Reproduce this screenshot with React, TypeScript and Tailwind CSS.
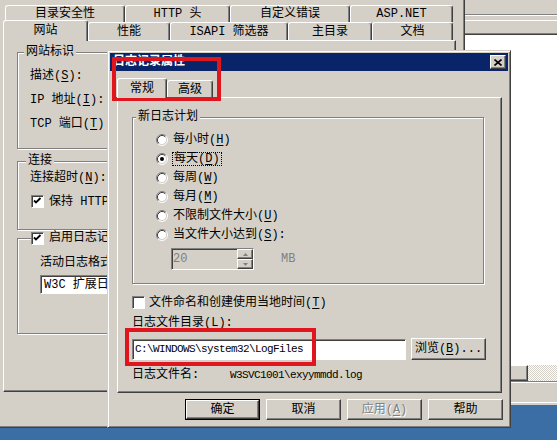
import React from "react";

const raised =
  "border border-t-white border-l-white border-r-[#404040] border-b-[#404040] shadow-[inset_-1px_-1px_#808080]";
const sunken =
  "border border-t-[#808080] border-l-[#808080] border-r-white border-b-white shadow-[inset_1px_1px_#404040]";

const U = ({ c }: { c: string }) => <span className="underline underline-offset-[2px]">{c}</span>;

const Radio = ({ checked = false }: { checked?: boolean }) => (
  <svg width="12" height="12" viewBox="0 0 12 12" className="shrink-0">
    <circle cx="6" cy="6" r="4.5" fill="#fff" />
    <path d="M2.11 9.89A5.5 5.5 0 0 1 9.89 2.11" fill="none" stroke="#808080" />
    <path d="M9.89 2.11A5.5 5.5 0 0 1 2.11 9.89" fill="none" stroke="#fff" />
    <path d="M2.82 9.18A4.5 4.5 0 0 1 9.18 2.82" fill="none" stroke="#404040" />
    <path d="M9.18 2.82A4.5 4.5 0 0 1 2.82 9.18" fill="none" stroke="#d4d0c8" />
    {checked && <circle cx="6" cy="6" r="2" fill="#000" />}
  </svg>
);

const Check = ({ checked = false }: { checked?: boolean }) => (
  <div className={`w-[13px] h-[13px] shrink-0 bg-white ${sunken}`}>
    {checked && (
      <svg width="11" height="11" viewBox="0 0 11 11">
        <path d="M2 4.5l2 2 4.5-4.5" fill="none" stroke="#000" strokeWidth="1.8" />
      </svg>
    )}
  </div>
);

interface GroupBoxProps {
  label: React.ReactNode;
  className?: string;
  labelClass?: string;
  children?: React.ReactNode;
}

const GroupBox: React.FC<GroupBoxProps> = ({ label, className = "", labelClass = "ml-[6px] px-[2px]", children }) => (
  <div className={`border border-[#808080] shadow-[1px_1px_0_#fff,inset_1px_1px_0_#fff] ${className}`}>
    <div className={`-mt-[8px] h-[14px] w-fit flex items-center gap-[5px] bg-[#d4d0c8] ${labelClass}`}>{label}</div>
    {children}
  </div>
);

const Btn = ({ children, isDefault = false, disabled = false }: { children: React.ReactNode; isDefault?: boolean; disabled?: boolean }) => {
  const text = disabled ? "text-[#808080] [text-shadow:1px_1px_#fff]" : "";
  return isDefault ? (
    <div className="w-[75px] h-[21px] border border-black">
      <div className={`h-full flex items-center justify-center ${raised} ${text}`}>{children}</div>
    </div>
  ) : (
    <div className={`w-[75px] h-[21px] flex items-center justify-center ${raised} ${text}`}>{children}</div>
  );
};

const BackTab = ({ label, w, selected = false }: { label: string; w: string; selected?: boolean }) => (
  <div
    className={`flex items-center justify-center bg-[#d4d0c8] rounded-t-[3px] border-t border-l border-r border-t-white border-l-white border-r-[#404040] shadow-[inset_-1px_0_#808080] ${w} ${
      selected ? "relative z-10 -mb-px h-[21px]" : "h-full"
    }`}
  >
    {label}
  </div>
);

const SpinArrow = ({ up }: { up?: boolean }) => (
  <svg width="5" height="3" viewBox="0 0 5 3">
    <path d={up ? "M2.5 0L5 3H0z" : "M0 0h5L2.5 3z"} fill="#808080" />
  </svg>
);

export default function App() {
  return (
    <div className="relative w-[557px] h-[440px] overflow-hidden bg-[#3a6ea5] text-black text-[12px] leading-[14px] font-['Liberation_Mono','Noto_Sans_CJK_SC',monospace]">
      {/* MMC window behind */}
      <div className="absolute left-[440px] top-0 w-[117px] h-[405px] bg-[#d4d0c8] flex flex-col">
        <div className="h-[14px]" />
        <div className="h-px bg-[#808080]" />
        <div className="h-px bg-white" />
        <div className="h-[4px]" />
        <div className="h-px bg-white" />
        <div className="h-[12px]" />
        <div className="h-px bg-[#808080]" />
        <div className="h-px bg-[#404040]" />
        <div className="h-[330px] bg-white" />
        <div className="h-[16px] flex">
          <div className={`w-[88px] bg-[#d4d0c8] ${raised}`} />
          <div className="flex-1 bg-[repeating-conic-gradient(#d4d0c8_0_25%,#fff_0_50%)] bg-[length:2px_2px]" />
        </div>
        <div className="h-px bg-[#808080]" />
        <div className="h-px bg-white" />
        <div className="h-[19px]" />
        <div className="h-px bg-white" />
      </div>

      {/* website properties window */}
      <div className="absolute left-0 top-0 w-[465px] h-[428px] bg-[#d4d0c8] pl-[3px] pt-[5px] border-r border-b border-r-[#404040] border-b-[#404040] shadow-[inset_-1px_-1px_#808080]">
        <div className="flex h-[17px] pl-[2px]">
          <BackTab label="目录安全性" w="w-[120px]" />
          <BackTab label="HTTP 头" w="w-[105px]" />
          <BackTab label="自定义错误" w="w-[120px]" />
          <BackTab label="ASP.NET" w="w-[103px]" />
        </div>
        <div className="flex items-end h-[18px]">
          <BackTab label="网站" w="w-[85px]" selected />
          <BackTab label="性能" w="w-[82px]" />
          <BackTab label="ISAPI 筛选器" w="w-[118px]" />
          <BackTab label="主目录" w="w-[84px]" />
          <BackTab label="文档" w="w-[81px]" />
        </div>
        <div className={`w-[453px] h-[352px] pt-[11px] pl-[13px] ${raised}`}>
          <GroupBox label="网站标识" className="w-[425px] h-[97px]">
            <div className="pl-[12px] pt-[5px]">
              <div className="h-[24px] flex items-center">描述(<U c="S" />):</div>
              <div className="h-[24px] flex items-center">IP 地址(<U c="I" />):</div>
              <div className="h-[24px] flex items-center">TCP 端口(<U c="T" />):</div>
            </div>
          </GroupBox>
          <GroupBox label="连接" className="w-[425px] h-[69px] mt-[12px]" labelClass="ml-[8px] px-[2px]">
            <div className="pl-[12px] pt-[5px] h-[14px] flex items-center">连接超时(<U c="N" />):</div>
            <div className="pl-[13px] mt-[13px] flex items-center gap-[5px] h-[13px]">
              <Check checked />
              <span>保持 HTTP 连接(<U c="K" />)</span>
            </div>
          </GroupBox>
          <GroupBox
            label={
              <>
                <Check checked />
                <span>启用日志记录(<U c="E" />)</span>
              </>
            }
            className="w-[425px] h-[96px] mt-[8px]"
            labelClass="ml-[13px] pr-[2px]"
          >
            <div className="pl-[22px] mt-[11px] h-[14px] flex items-center">活动日志格式(<U c="V" />):</div>
            <div className={`ml-[22px] mt-[5px] w-[220px] h-[19px] bg-white flex items-center pl-[3px] ${sunken}`}>
              W3C 扩展日志文件格式
            </div>
          </GroupBox>
        </div>
      </div>

      {/* logging properties dialog */}
      <div className="absolute left-[107px] top-[50px] w-[404px] h-[378px] bg-[#d4d0c8] p-[2px] flex flex-col border border-t-[#d4d0c8] border-l-[#d4d0c8] border-r-[#404040] border-b-[#404040] shadow-[inset_1px_1px_#fff,inset_-1px_-1px_#808080]">
        <div className="h-[18px] shrink-0 bg-[#0a246a] flex items-center justify-between pl-[3px] pr-[2px]">
          <span className="text-white font-bold">日志记录属性</span>
          <div className={`w-[16px] h-[14px] bg-[#d4d0c8] flex items-center justify-center ${raised}`}>
            <svg width="8" height="7" viewBox="0 0 8 7">
              <path d="M0.5 0.5l7 6M7.5 0.5l-7 6" stroke="#000" strokeWidth="1.6" />
            </svg>
          </div>
        </div>

        <div className="pl-[7px] pr-[6px] pt-[7px]">
          <div className="flex items-end h-[19px]">
            <div className="relative z-10 -mb-px h-[20px] w-[50px] flex items-center justify-center bg-[#d4d0c8] rounded-t-[3px] border-t border-l border-r border-t-white border-l-white border-r-[#404040] shadow-[inset_-1px_0_#808080]">
              常规
            </div>
            <div className="h-[17px] w-[46px] flex items-center justify-center pt-[2px] bg-[#d4d0c8] rounded-t-[3px] border-t border-l border-r border-t-white border-l-white border-r-[#404040] shadow-[inset_-1px_0_#808080]">
              高级
            </div>
          </div>

          <div className={`h-[296px] pt-[19px] pl-[14px] ${raised}`}>
            <GroupBox label="新日志计划" className="w-[352px] h-[167px]" labelClass="ml-[3px] px-[2px]">
              <div className="pl-[23px] pt-[6px]">
                <div className="h-[19px] flex items-center gap-[5px]">
                  <Radio />
                  <span>每小时(<U c="H" />)</span>
                </div>
                <div className="h-[19px] flex items-center gap-[4px]">
                  <Radio checked />
                  <span className="border border-dotted border-black px-px leading-[12px]">
                    每天(<U c="D" />)
                  </span>
                </div>
                <div className="h-[19px] flex items-center gap-[5px]">
                  <Radio />
                  <span>每周(<U c="W" />)</span>
                </div>
                <div className="h-[19px] flex items-center gap-[5px]">
                  <Radio />
                  <span>每月(<U c="M" />)</span>
                </div>
                <div className="h-[19px] flex items-center gap-[5px]">
                  <Radio />
                  <span>不限制文件大小(<U c="U" />)</span>
                </div>
                <div className="h-[19px] flex items-center gap-[5px]">
                  <Radio />
                  <span>当文件大小达到(<U c="S" />):</span>
                </div>
                <div className="mt-[4px] flex items-center">
                  <div className={`ml-[15px] w-[83px] h-[22px] flex items-center justify-between ${sunken}`}>
                    <span className="pl-[1px] text-[#808080]">20</span>
                    <div className="flex flex-col w-[16px] h-full">
                      <div className={`flex-1 flex items-center justify-center ${raised}`}>
                        <SpinArrow up />
                      </div>
                      <div className={`flex-1 flex items-center justify-center ${raised}`}>
                        <SpinArrow />
                      </div>
                    </div>
                  </div>
                  <span className="ml-[27px] text-[#808080]">MB</span>
                </div>
              </div>
            </GroupBox>

            <div className="mt-[12px] h-[13px] flex items-center gap-[4px]">
              <Check />
              <span>文件命名和创建使用当地时间(<U c="T" />)</span>
            </div>
            <div className="mt-[7px] h-[14px] flex items-center">日志文件目录(<U c="L" />):</div>
            <div className="mt-[8px] h-[22px] flex items-center gap-[5px]">
              <div className={`w-[274px] h-[21px] bg-white flex items-center pl-[2px] ${sunken}`}>
                <span className="text-[11px] tracking-[-0.6px]">C:\WINDOWS\system32\LogFiles</span>
              </div>
              <div className={`w-[75px] h-[22px] flex items-center justify-center ${raised}`}>
                浏览(<U c="B" />)...
              </div>
            </div>
            <div className="mt-[8px] h-[14px] flex items-center">
              <span className="w-[98px]">日志文件名:</span>
              <span className="text-[11px] tracking-[-0.6px]">W3SVC1001\exyymmdd.log</span>
            </div>
          </div>

          <div className="mt-[6px] -mr-px flex justify-end gap-[6px]">
            <Btn isDefault>确定</Btn>
            <Btn>取消</Btn>
            <Btn disabled>
              应用(<U c="A" />)
            </Btn>
            <Btn>帮助</Btn>
          </div>
        </div>
      </div>

      {/* red annotation boxes */}
      <div className="absolute left-[112px] top-[57px] w-[109px] h-[44px] border-[4px] border-[#e0161e]" />
      <div className="absolute left-[125px] top-[328px] w-[191px] h-[38px] border-[4px] border-[#e0161e]" />
    </div>
  );
}
